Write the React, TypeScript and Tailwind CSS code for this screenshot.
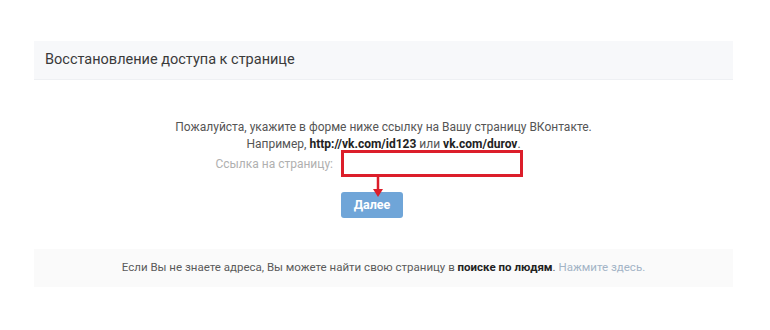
export default function App() {
  return (
    <div className="h-[330px] w-[770px] bg-white pt-[41px] font-['Roboto',sans-serif]">
      <div className="ml-[34px] w-[699px]">
        {/* header */}
        <div className="flex h-[39px] items-center border-b border-[#eef0f3] bg-[#f7f8fa] px-[11px]">
          <span className="text-[14.5px] text-[#3a3a3a]">Восстановление доступа к странице</span>
        </div>

        {/* body */}
        <div className="h-[169px] bg-white pt-[39px]">
          <div className="text-center text-[12px] leading-[17px] text-[#555]">
            <div>Пожалуйста, укажите в форме ниже ссылку на Вашу страницу ВКонтакте.</div>
            <div>
              Например, <b className="font-bold text-[#222]">http://vk.com/id123</b> или{' '}
              <b className="font-bold text-[#222]">vk.com/durov</b>.
            </div>
          </div>

          <div className="mt-[-3px] grid grid-cols-[299px_1fr] items-center gap-x-[8px] gap-y-[15px]">
            <div className="text-right text-[12px] text-[#b0b0b0]">Ссылка на страницу:</div>
            <div className="relative h-[27px] w-[182px] border-[3px] border-[#dc1e2a] bg-white">
              <svg className="absolute left-[28px] top-[23px]" width="12" height="24" viewBox="0 0 12 24">
                <line x1="6" y1="0" x2="6" y2="16" stroke="#dc1e2a" strokeWidth="2.5" />
                <polygon points="1,13 11,13 6,21" fill="#dc1e2a" />
              </svg>
            </div>
            <div />
            <button className="h-[26px] w-[62px] rounded-[3px] bg-[#6fa5d8] text-[12.5px] font-bold text-white">
              Далее
            </button>
          </div>
        </div>

        {/* footer */}
        <div className="flex h-[38px] items-center justify-center bg-[#fafafa] text-[11.5px] text-[#5a5a5a]">
          <span>
            Если Вы не знаете адреса, Вы можете найти свою страницу в{' '}
            <b className="font-bold text-[#222]">поиске по людям</b>.{' '}
            <span className="text-[#a3b4c6]">Нажмите здесь.</span>
          </span>
        </div>
      </div>
    </div>
  );
}
